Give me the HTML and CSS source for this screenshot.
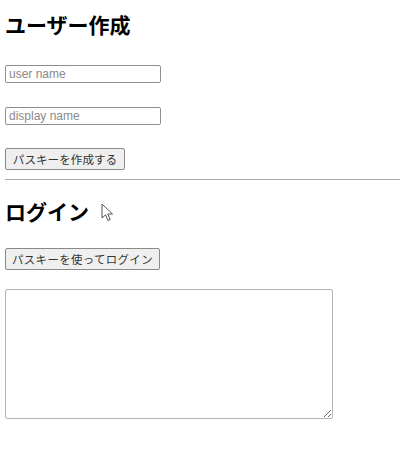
FILE: index.html
```html
<!DOCTYPE html>
<html lang="ja">
<head>
<meta charset="utf-8">
<title>Passkey</title>
<link rel="stylesheet" href="styles.css">
</head>
<body>
<section class="section create">
  <h2 class="title">ユーザー作成</h2>
  <input class="text first" type="text" placeholder="user name">
  <input class="text second" type="text" placeholder="display name">
  <button class="btn create-btn" type="button">パスキーを作成する</button>
</section>
<hr class="rule">
<section class="section login">
  <h2 class="title login-title">ログイン<svg class="cursor" width="13" height="19" viewBox="0 0 13 19"><path d="M1 1 L1 15 L4.5 11.8 L7 17.5 L9.2 16.5 L6.8 11 L11.5 11 Z" fill="#fff" stroke="#555" stroke-width="1" stroke-linejoin="round"/></svg></h2>
  <button class="btn login-btn" type="button">パスキーを使ってログイン</button>
  <textarea class="output"></textarea>
</section>
</body>
</html>
```
FILE: styles.css
```css
html, body {
  background: #fff;
}
body {
  margin: 0;
  padding: 0 0 0 5px;
  font-family: "Noto Sans CJK JP", "Liberation Sans", sans-serif;
  color: #000;
}
.section {
  display: flex;
  flex-direction: column;
  align-items: flex-start;
}
.title {
  font-size: 21px;
  line-height: 26px;
  font-weight: bold;
  margin: 11px 0 0;
  position: relative;
}
.login-title {
  margin-top: 18px;
}
.cursor {
  position: absolute;
  left: 96px;
  top: 5px;
}
.text {
  box-sizing: border-box;
  width: 156px;
  height: 18px;
  border: 1px solid #8f8f8f;
  border-radius: 2px;
  padding: 0 3px;
  font-family: "Liberation Sans", Arial, sans-serif;
  font-size: 12px;
  background: #fff;
}
.text::placeholder {
  color: #8a8a8a;
}
.first {
  margin-top: 28px;
}
.second {
  margin-top: 24px;
}
.btn {
  box-sizing: border-box;
  height: 22px;
  padding: 0;
  border: 1px solid #8a8a8a;
  border-radius: 2px;
  background: #efefef;
  font-family: "Noto Sans CJK JP", sans-serif;
  font-size: 11.6px;
  line-height: 20px;
  color: #333;
  white-space: nowrap;
  text-align: center;
}
.create-btn {
  margin-top: 23px;
  width: 120px;
}
.login-btn {
  margin-top: 24px;
  width: 155px;
  font-size: 11.4px;
  letter-spacing: 0.4px;
}
.rule {
  margin: 9px 0 0;
  border: 0;
  border-top: 1px solid #aaa;
  height: 0;
}
.output {
  box-sizing: border-box;
  margin-top: 19px;
  width: 328px;
  height: 130px;
  border: 1px solid #b5b5b5;
  border-radius: 2px;
  resize: both;
  background: #fff;
}
```
